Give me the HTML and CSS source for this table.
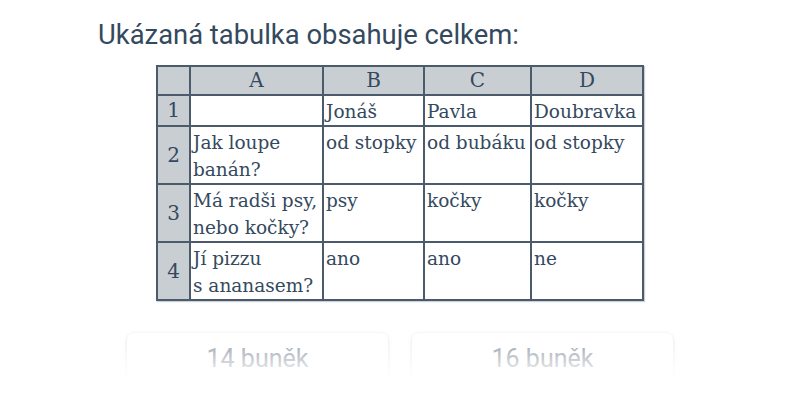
FILE: index.html
```html
<!DOCTYPE html>
<html lang="cs">
<head>
<meta charset="utf-8">
<link rel="stylesheet" href="styles.css">
</head>
<body>
<div class="page">
  <h1 class="question">Ukázaná tabulka obsahuje celkem:</h1>
  <div class="table-wrap">
    <table class="sheet">
      <colgroup>
        <col class="c-idx"><col class="c-a"><col class="c-b"><col class="c-c"><col class="c-d">
      </colgroup>
      <tr class="hdr"><th></th><th>A</th><th>B</th><th>C</th><th>D</th></tr>
      <tr class="r-short"><th>1</th><td></td><td>Jonáš</td><td>Pavla</td><td>Doubravka</td></tr>
      <tr class="r-tall"><th>2</th><td>Jak loupe<br>banán?</td><td>od stopky</td><td>od bubáku</td><td>od stopky</td></tr>
      <tr class="r-tall"><th>3</th><td>Má radši psy,<br>nebo kočky?</td><td>psy</td><td>kočky</td><td>kočky</td></tr>
      <tr class="r-tall"><th>4</th><td>Jí pizzu<br>s ananasem?</td><td>ano</td><td>ano</td><td>ne</td></tr>
    </table>
  </div>
  <div class="answers">
    <div class="answer">14 buněk</div>
    <div class="answer">16 buněk</div>
  </div>
  <div class="fade"></div>
</div>
</body>
</html>
```

FILE: styles.css
```css
html, body {
  margin: 0;
  padding: 0;
  background: #ffffff;
}
.page {
  position: relative;
  width: 800px;
  height: 400px;
  overflow: hidden;
}
.question {
  margin: 0;
  padding: 17px 0 0 98px;
  font-family: Roboto, "Noto Sans", sans-serif;
  font-weight: 400;
  font-size: 27.4px;
  line-height: 36px;
  color: #34495e;
}
.table-wrap {
  display: flex;
  justify-content: center;
  padding-top: 12px;
}
.sheet {
  border-collapse: collapse;
  font-family: "DejaVu Serif", serif;
  font-size: 18.5px;
  color: #34495e;
  box-shadow: 1px 1px 1px rgba(52, 73, 94, 0.25);
}
.sheet th, .sheet td {
  border: 2px solid #4b5b6b;
  padding: 2px 2px 0;
  line-height: 27px;
  vertical-align: top;
  text-align: left;
  font-weight: 400;
  white-space: nowrap;
  box-sizing: border-box;
}
.sheet th {
  background: #c9ced3;
  text-align: center;
  vertical-align: middle;
  padding: 0;
  font-size: 20px;
}
.hdr th { height: 29px; }
.r-short td, .r-short th { height: 29px; }
.r-tall td, .r-tall th { height: 55px; }
.c-idx { width: 33px; }
.c-a { width: 133px; }
.c-b { width: 101px; }
.c-c { width: 107px; }
.c-d { width: 112px; }
.answers {
  display: flex;
  justify-content: center;
  gap: 24px;
  padding-top: 32px;
}
.answer {
  width: 261px;
  height: 70px;
  border-radius: 7px;
  background: #ffffff;
  box-shadow: 0 1px 4px rgba(0, 0, 0, 0.12);
  font-family: Roboto, "Noto Sans", sans-serif;
  font-size: 25px;
  color: #a3aab4;
  text-align: center;
  padding-top: 11px;
  box-sizing: border-box;
}
.fade {
  position: absolute;
  left: 0;
  right: 0;
  top: 344px;
  height: 56px;
  background: linear-gradient(to bottom, rgba(255,255,255,0) 0%, rgba(255,255,255,0.85) 55%, #ffffff 70%);
}
```
